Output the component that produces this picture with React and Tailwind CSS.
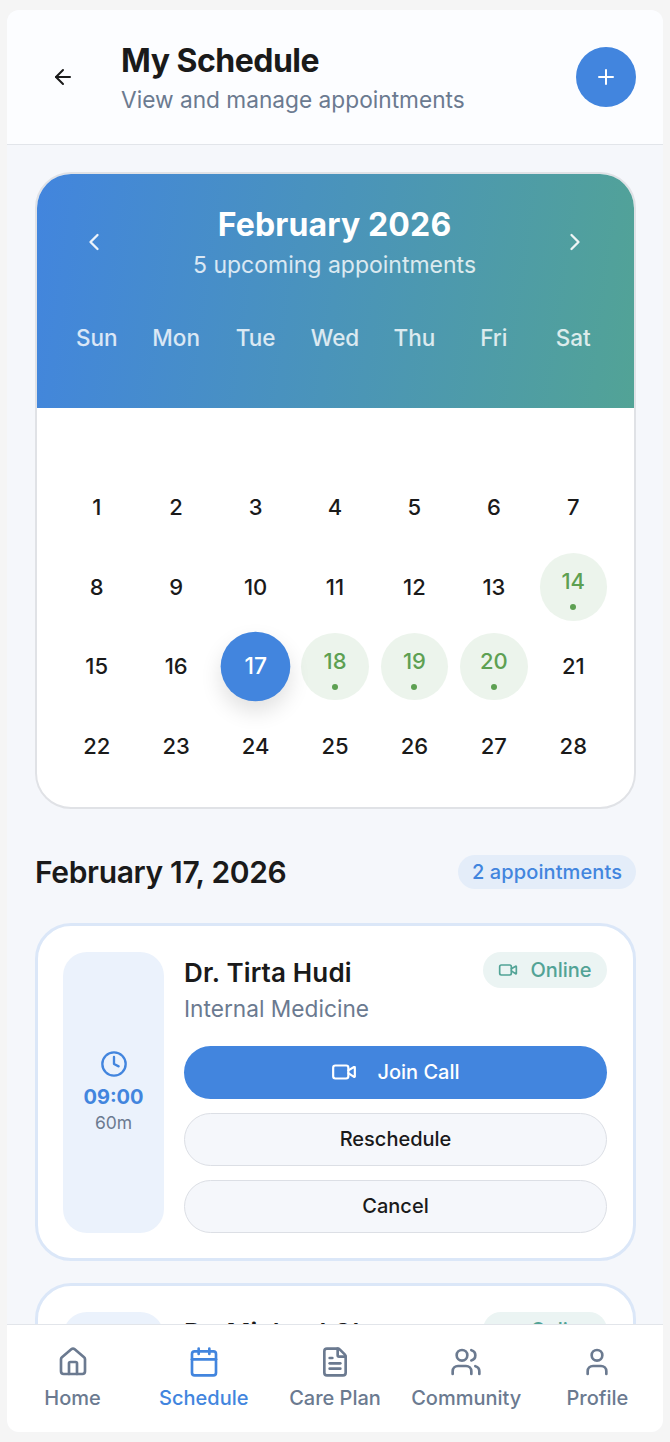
import { ArrowLeft, Calendar, ChevronLeft, ChevronRight, Clock, FileText, House, Plus, User, Users, Video } from 'lucide-react';

const weekDays = ['Sun', 'Mon', 'Tue', 'Wed', 'Thu', 'Fri', 'Sat'];
const days = Array.from({ length: 28 }, (_, i) => i + 1);
const bookedDays = [14, 18, 19, 20];
const selectedDay = 17;

const navItems = [
  { label: 'Home', icon: House },
  { label: 'Schedule', icon: Calendar, active: true },
  { label: 'Care Plan', icon: FileText },
  { label: 'Community', icon: Users },
  { label: 'Profile', icon: User },
];

function DayCell({ day }) {
  if (day === selectedDay) {
    return (
      <div className="flex aspect-square scale-[1.04] items-center justify-center rounded-full bg-[#4285de] text-[22px] font-medium text-white shadow-[0_10px_20px_rgba(0,0,0,0.12)]">
        {day}
      </div>
    );
  }
  if (bookedDays.includes(day)) {
    return (
      <div className="flex aspect-square flex-col items-center justify-center rounded-full bg-[#ecf4ec] pt-[3px] text-[22px] font-medium text-[#5da052]">
        <span className="leading-[28px]">{day}</span>
        <span className="mt-[9px] size-[6px] rounded-full bg-[#5da052]" />
      </div>
    );
  }
  return <div className="flex aspect-square items-center justify-center text-[22px] font-medium text-[#1a1a1a]">{day}</div>;
}

function CalendarCard() {
  return (
    <section className="overflow-hidden rounded-[36px] border-2 border-[#e0e2e6] bg-white">
      <div className="h-[234px] bg-[linear-gradient(98deg,#4285de,#52a396)] pt-[30px]">
        <div className="flex items-center justify-between pr-[45px] pl-[43px]">
          <ChevronLeft size={28} strokeWidth={2} className="text-white/90" />
          <div className="text-center">
            <h2 className="text-[32px] leading-[42px] font-bold tracking-[0.15px] text-white">February 2026</h2>
            <p className="mt-[5px] text-[23px] leading-[28px] text-white/80">5 upcoming appointments</p>
          </div>
          <ChevronRight size={28} strokeWidth={2} className="text-white/90" />
        </div>
        <div className="mt-[45px] grid grid-cols-7 gap-[12px] pr-[27px] pl-[26px] text-center text-[22.5px] leading-[28px] font-medium text-white/80">
          {weekDays.map(d => (
            <span key={d}>{d}</span>
          ))}
        </div>
      </div>
      <div className="grid grid-cols-7 gap-[12px] pt-[66px] pr-[27px] pb-[27px] pl-[26px]">
        {days.map(d => (
          <DayCell key={d} day={d} />
        ))}
      </div>
    </section>
  );
}

function AppointmentCard({ name, specialty, time, duration }) {
  return (
    <article className="flex gap-[20px] rounded-[36px] border-[3px] border-[#dbe7f8] bg-white pt-[26px] pr-[26px] pb-[25px] pl-[25px]">
      <div className="flex w-[101px] shrink-0 flex-col items-center justify-center rounded-[24px] bg-[#ebf2fc]">
        <Clock size={28} strokeWidth={2} className="text-[#4285de]" />
        <span className="mt-[5px] text-[20px] leading-[28px] font-bold text-[#4285de]">{time}</span>
        <span className="text-[17.5px] leading-[24px] text-[#6b7a90]">{duration}</span>
      </div>
      <div className="min-w-0 flex-1">
        <div className="flex items-start justify-between">
          <div>
            <h3 className="text-[26px] leading-[42px] font-semibold tracking-[0.15px] text-[#1a1a1a]">{name}</h3>
            <p className="text-[22.7px] leading-[30px] text-[#6b7a90]">{specialty}</p>
          </div>
          <span className="flex h-[36px] w-[124px] items-center justify-center gap-[12px] rounded-full bg-[#ebf4f3] text-[20px] font-medium text-[#52a396]">
            <Video size={20} strokeWidth={2} />
            Online
          </span>
        </div>
        <div className="mt-[22px] flex flex-col gap-[14px]">
          <button className="flex h-[53px] items-center justify-center gap-[20px] rounded-full bg-[#4285de] text-[20px] font-medium text-white">
            <Video size={26} strokeWidth={2} />
            Join Call
          </button>
          <button className="h-[53px] rounded-full border border-[#dcdfe5] bg-[#f5f7fb] text-[20px] font-medium text-[#1a1a1a]">
            Reschedule
          </button>
          <button className="h-[53px] rounded-full border border-[#dcdfe5] bg-[#f5f7fb] text-[20px] font-medium text-[#1a1a1a]">
            Cancel
          </button>
        </div>
      </div>
    </article>
  );
}

export default function App() {
  return (
    <div className="h-[1442px] bg-[#f5f5f5] px-[7px] py-[10px] font-['Inter',sans-serif]">
      <div className="flex h-full flex-col overflow-hidden rounded-[12px] bg-[#f5f7fb]">
        <header className="flex h-[135px] shrink-0 items-center border-b border-[#e2e5ea] bg-[#fcfdff] pr-[27px] pl-[44px]">
          <ArrowLeft size={24} strokeWidth={2} className="text-[#1a1a1a]" />
          <div className="ml-[46px] flex-1 pt-[2px]">
            <h1 className="text-[32px] leading-[40px] font-bold tracking-[-0.5px] text-[#1a1a1a]">My Schedule</h1>
            <p className="mt-[4px] text-[22.7px] leading-[30px] text-[#6b7a90]">View and manage appointments</p>
          </div>
          <button className="flex size-[60px] items-center justify-center rounded-full bg-[#4285de] text-white">
            <Plus size={24} strokeWidth={2} />
          </button>
        </header>

        <main className="min-h-0 flex-1 overflow-hidden pt-[27px] pr-[27px] pl-[28px]">
          <CalendarCard />
          <div className="mt-[45px] mb-[33px] flex items-center justify-between">
            <h2 className="text-[30px] leading-[36px] font-semibold tracking-[-0.35px] text-[#1a1a1a]">February 17, 2026</h2>
            <span className="flex h-[34px] w-[178px] items-center justify-center rounded-full bg-[#e4edf9] text-[20px] font-medium tracking-[0.1px] text-[#4285de]">
              2 appointments
            </span>
          </div>
          <div className="flex flex-col gap-[22px]">
            <AppointmentCard name="Dr. Tirta Hudi" specialty="Internal Medicine" time="09:00" duration="60m" />
            <AppointmentCard name="Dr. Michael Chen" specialty="Cardiology" time="14:30" duration="30m" />
          </div>
        </main>

        <nav className="grid h-[108px] shrink-0 grid-cols-5 border-t border-[#e2e5ea] bg-white pt-[21px]">
          {navItems.map(({ label, icon: Icon, active }) => (
            <div key={label} className={`flex flex-col items-center ${active ? 'text-[#4285de]' : 'text-[#6b7a90]'}`}>
              <Icon size={32} strokeWidth={2} />
              <span className="mt-[6px] text-[20px] leading-[28px] font-medium">{label}</span>
            </div>
          ))}
        </nav>
      </div>
    </div>
  );
}
